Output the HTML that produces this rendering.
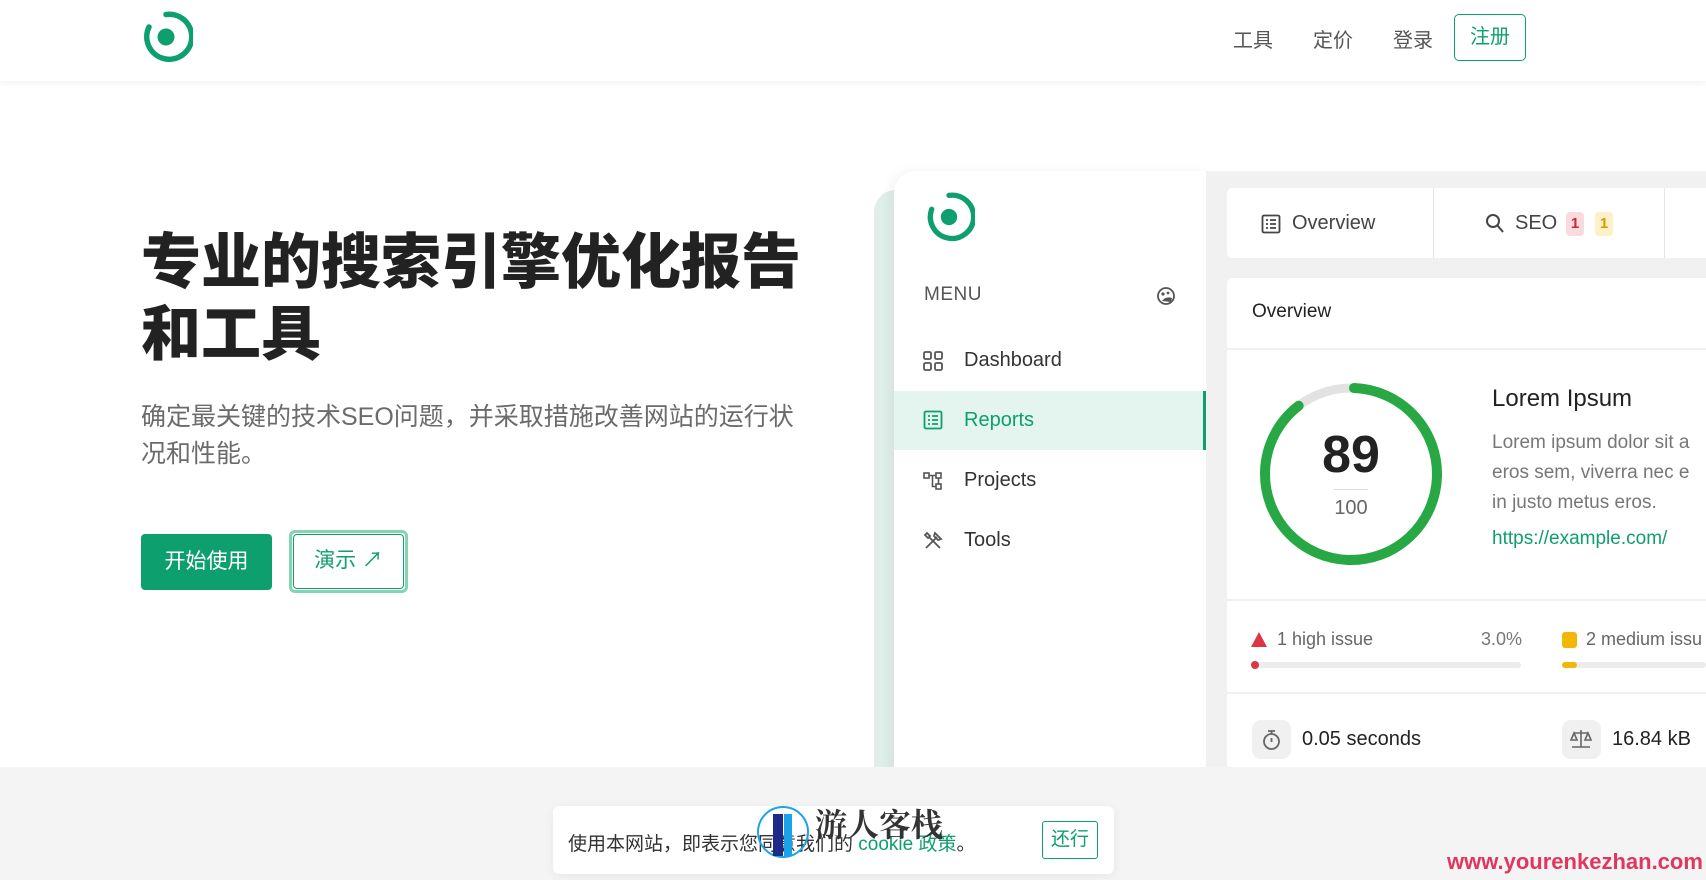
<!DOCTYPE html>
<html><head><meta charset="utf-8"><style>
*{box-sizing:border-box;margin:0;padding:0}
body{width:1706px;height:880px;overflow:hidden;background:#fff;font-family:"Liberation Sans","Noto Sans CJK SC",sans-serif;position:relative;color:#222}
.a{position:absolute}
.cjk{font-family:"Liberation Sans","Noto Sans CJK SC",sans-serif}
</style></head><body>
<!-- header -->
<div class="a" style="left:0;top:0;width:1706px;height:81px;background:#fff;box-shadow:0 2px 8px rgba(0,0,0,.06);z-index:3"></div>
<svg class="a" style="left:139px;top:10px;z-index:4" width="54" height="54" viewBox="0 0 54 54">
<path d="M10 17 A22.5 22.5 0 1 0 27 4.5" fill="none" stroke="#0e9f6e" stroke-width="5.5" stroke-linecap="round"/>
<circle cx="27" cy="27" r="8.5" fill="#0e9f6e"/></svg>
<div class="a cjk" style="z-index:4;top:24px;left:1233px;font-size:20px;color:#555">工具</div>
<div class="a cjk" style="z-index:4;top:24px;left:1313px;font-size:20px;color:#555">定价</div>
<div class="a cjk" style="z-index:4;top:24px;left:1393px;font-size:20px;color:#555">登录</div>
<div class="a cjk" style="z-index:4;top:14px;left:1454px;width:72px;height:47px;border:1.5px solid #0e9f6e;border-radius:5px;color:#0e9f6e;font-size:20px;text-align:center;line-height:44px">注册</div>

<!-- hero -->
<div class="a cjk" style="left:141px;top:227px;font-size:60px;font-weight:900;line-height:72px;color:#222;letter-spacing:0;white-space:nowrap">专业的搜索引擎优化报告<br>和工具</div>
<div class="a cjk" style="left:141px;top:399px;width:680px;font-size:25px;line-height:37px;color:#6b6b6b;white-space:nowrap">确定最关键的技术SEO问题，并采取措施改善网站的运行状<br>况和性能。</div>
<div class="a cjk" style="left:141px;top:534px;width:131px;height:56px;background:#0e9f6e;border-radius:4px;color:#fff;font-size:21px;text-align:center;line-height:56px">开始使用</div>
<div class="a cjk" style="left:289px;top:530px;width:119px;height:63px;border:3px solid #84d3b3;border-radius:6px;padding:1px">
<div style="width:100%;height:100%;border:1.5px solid #0e9f6e;border-radius:4px;background:#fff;color:#0e9f6e;font-size:21px;text-align:center;line-height:52px">演示 ↗</div></div>

<!-- panel -->
<div class="a" style="left:874px;top:190px;width:40px;height:590px;background:#dfeee8;border-radius:22px 0 0 0"></div>
<div class="a" style="left:894px;top:171px;width:312px;height:610px;background:#fff;border-radius:22px 0 0 0;box-shadow:-4px 0 12px rgba(0,0,0,.05)"></div>
<div class="a" style="left:1206px;top:171px;width:500px;height:610px;background:#f1f1f1"></div>
<svg class="a" style="left:923px;top:191px" width="52" height="52" viewBox="0 0 54 54">
<path d="M9 19 A22.5 22.5 0 1 0 27 4.5" fill="none" stroke="#0e9f6e" stroke-width="5.5" stroke-linecap="round"/>
<circle cx="27" cy="27" r="8.5" fill="#0e9f6e"/></svg>
<div class="a" style="left:924px;top:284px;font-size:19px;color:#555;letter-spacing:.5px">MENU</div>
<svg class="a" style="left:1156px;top:286px" width="20" height="20" viewBox="0 0 20 20"><circle cx="10" cy="10" r="8" fill="none" stroke="#555" stroke-width="1.8"/><circle cx="7" cy="8" r="1.6" fill="#555"/><circle cx="12" cy="7" r="1.4" fill="#555"/><path d="M6 15 Q10 10 16 12 L15 16 Z" fill="#555"/></svg>
<!-- menu items -->
<svg class="a" style="left:923px;top:351px" width="20" height="20" viewBox="0 0 20 20" fill="none" stroke="#555" stroke-width="1.8"><rect x="1" y="1" width="7" height="7" rx="1.5"/><rect x="12" y="1" width="7" height="7" rx="1.5"/><rect x="1" y="12" width="7" height="7" rx="1.5"/><rect x="12" y="12" width="7" height="7" rx="1.5"/></svg>
<div class="a" style="left:964px;top:349px;font-size:20px;color:#333">Dashboard</div>
<div class="a" style="left:894px;top:391px;width:312px;height:59px;background:#e3f5ee;border-right:3px solid #0e9f6e"></div>
<svg class="a" style="left:923px;top:410px" width="20" height="20" viewBox="0 0 20 20" fill="none" stroke="#0e9f6e" stroke-width="1.8"><rect x="1.5" y="1.5" width="17" height="17" rx="1.5"/><path d="M5 6h2M5 10h2M5 14h2M9 6h6M9 10h6M9 14h6"/></svg>
<div class="a" style="left:964px;top:409px;font-size:20px;color:#0e9f6e">Reports</div>
<svg class="a" style="left:923px;top:471px" width="20" height="20" viewBox="0 0 20 20" fill="none" stroke="#555" stroke-width="1.6"><rect x="1" y="2" width="5" height="5"/><rect x="13" y="2" width="5" height="5"/><rect x="13" y="13" width="5" height="5"/><path d="M6 4.5h7M15.5 7v6M9.5 4.5v11h3.5"/></svg>
<div class="a" style="left:964px;top:469px;font-size:20px;color:#333">Projects</div>
<svg class="a" style="left:923px;top:531px" width="20" height="20" viewBox="0 0 20 20" fill="none" stroke="#555" stroke-width="1.8"><path d="M3 17L14 6M12 2l6 6-3 1-4-4zM17 17L6 6M2 4l2-2 3 3-2 2z"/></svg>
<div class="a" style="left:964px;top:529px;font-size:20px;color:#333">Tools</div>

<!-- tabs card -->
<div class="a" style="left:1227px;top:188px;width:479px;height:70px;background:#fff;border-radius:5px 0 0 5px"></div>
<div class="a" style="left:1433px;top:188px;width:1px;height:70px;background:#e6e6e6"></div>
<div class="a" style="left:1664px;top:188px;width:1px;height:70px;background:#e6e6e6"></div>
<svg class="a" style="left:1261px;top:214px" width="20" height="20" viewBox="0 0 20 20" fill="none" stroke="#444" stroke-width="1.8"><rect x="1.5" y="1.5" width="17" height="17" rx="1.5"/><path d="M5 6h2M5 10h2M5 14h2M9 6h6M9 10h6M9 14h6"/></svg>
<div class="a" style="left:1292px;top:212px;font-size:20px;color:#444">Overview</div>
<svg class="a" style="left:1485px;top:213px" width="20" height="21" viewBox="0 0 20 21" fill="none" stroke="#444" stroke-width="2"><circle cx="8" cy="8" r="6"/><path d="M12.5 12.5L18 19"/></svg>
<div class="a" style="left:1515px;top:212px;font-size:20px;color:#444">SEO</div>
<div class="a" style="left:1566px;top:212px;width:18px;height:24px;background:#fadadd;border-radius:4px;color:#d0243a;font-size:15px;font-weight:bold;text-align:center;line-height:24px">1</div>
<div class="a" style="left:1595px;top:212px;width:18px;height:24px;background:#fdf1c8;border-radius:4px;color:#d99a00;font-size:15px;font-weight:bold;text-align:center;line-height:24px">1</div>

<!-- overview card -->
<div class="a" style="left:1227px;top:278px;width:479px;height:503px;background:#fff;border-radius:5px 0 0 0"></div>
<div class="a" style="left:1252px;top:301px;font-size:19px;color:#222">Overview</div>
<div class="a" style="left:1227px;top:348px;width:479px;height:2px;background:#f0f0f0"></div>
<svg class="a" style="left:1259px;top:382px" width="184" height="184" viewBox="0 0 184 184">
<circle cx="92" cy="92" r="86" fill="none" stroke="#e2e2e2" stroke-width="9"/>
<circle cx="92" cy="92" r="86" fill="none" stroke="#28a745" stroke-width="10" stroke-linecap="round" stroke-dasharray="480.9 540.4" transform="rotate(-88 92 92)"/></svg>
<div class="a" style="left:1291px;top:425px;width:120px;text-align:center;font-size:52px;font-weight:bold;color:#222">89</div>
<div class="a" style="left:1334px;top:489px;width:34px;height:1px;background:#ddd"></div>
<div class="a" style="left:1291px;top:497px;width:120px;text-align:center;font-size:20px;color:#666">100</div>
<div class="a" style="left:1492px;top:385px;font-size:24px;color:#222;white-space:nowrap">Lorem Ipsum</div>
<div class="a" style="left:1492px;top:428px;font-size:19px;line-height:30px;color:#777;white-space:nowrap">Lorem ipsum dolor sit a<br>eros sem, viverra nec e<br>in justo metus eros.</div>
<div class="a" style="left:1492px;top:528px;font-size:19px;color:#0e9f6e;white-space:nowrap">https://example.com/</div>
<div class="a" style="left:1227px;top:599px;width:479px;height:2px;background:#f0f0f0"></div>
<svg class="a" style="left:1251px;top:632px" width="16" height="15"><path d="M8 0L16 15H0Z" fill="#dc3545"/></svg>
<div class="a" style="left:1277px;top:629px;font-size:18px;color:#666">1 high issue</div>
<div class="a" style="left:1481px;top:629px;font-size:18px;color:#777">3.0%</div>
<div class="a" style="left:1252px;top:662px;width:269px;height:6px;background:#ececec;border-radius:3px"></div>
<div class="a" style="left:1251px;top:661px;width:8px;height:8px;background:#dc3545;border-radius:4px"></div>
<div class="a" style="left:1562px;top:632px;width:15px;height:16px;background:#f2b705;border-radius:3px"></div>
<div class="a" style="left:1586px;top:629px;font-size:18px;color:#666;white-space:nowrap">2 medium issu</div>
<div class="a" style="left:1562px;top:662px;width:144px;height:6px;background:#ececec;border-radius:3px"></div>
<div class="a" style="left:1562px;top:662px;width:15px;height:6px;background:#f2b705;border-radius:3px"></div>
<div class="a" style="left:1227px;top:692px;width:479px;height:2px;background:#f0f0f0"></div>
<div class="a" style="left:1252px;top:720px;width:39px;height:39px;background:#f0f0f0;border-radius:9px"></div>
<svg class="a" style="left:1261px;top:729px" width="21" height="22" viewBox="0 0 21 22" fill="none" stroke="#666" stroke-width="1.8"><circle cx="10.5" cy="12.5" r="7.5"/><path d="M7 2h7M10.5 2v3M10.5 9v4"/></svg>
<div class="a" style="left:1302px;top:728px;font-size:20px;color:#222">0.05 seconds</div>
<div class="a" style="left:1562px;top:720px;width:39px;height:39px;background:#f0f0f0;border-radius:9px"></div>
<svg class="a" style="left:1570px;top:729px" width="22" height="20" viewBox="0 0 22 20" fill="none" stroke="#666" stroke-width="1.6"><path d="M11 1v17M4 4h14M2 18h18M4 4l-3 7h6zM18 4l-3 7h6z"/></svg>
<div class="a" style="left:1612px;top:728px;font-size:20px;color:#222">16.84 kB</div>

<!-- bottom band -->
<div class="a" style="left:0;top:767px;width:1706px;height:113px;background:#f4f4f4"></div>
<div class="a" style="left:553px;top:806px;width:561px;height:68px;background:#fff;border-radius:6px;box-shadow:0 2px 10px rgba(0,0,0,.06)"></div>
<div class="a cjk" style="left:568px;top:829px;font-size:19px;color:#333;white-space:nowrap">使用本网站，即表示您同意我们的 <span style="color:#0e9f6e">cookie 政策</span>。</div>
<div class="a cjk" style="left:1042px;top:821px;width:56px;height:38px;border:1.5px solid #0e9f6e;border-radius:3px;color:#0e9f6e;font-size:19px;text-align:center;line-height:35px">还行</div>
<div class="a" style="left:757px;top:806px;width:52px;height:52px;border:2.5px solid #1aa3e8;border-radius:50%"></div>
<div class="a" style="left:773px;top:814px;width:10px;height:42px;background:#1d2a8a"></div>
<div class="a" style="left:784px;top:814px;width:8px;height:42px;background:#1aa3e8"></div>
<div class="a" style="left:815px;top:800px;font-family:'Noto Serif CJK SC',serif;font-size:32px;font-weight:bold;color:#333">游人客栈</div>
<div class="a" style="left:1447px;top:849px;font-size:22px;font-weight:bold;color:#e0375e;white-space:nowrap">www.yourenkezhan.com</div>
</body></html>
